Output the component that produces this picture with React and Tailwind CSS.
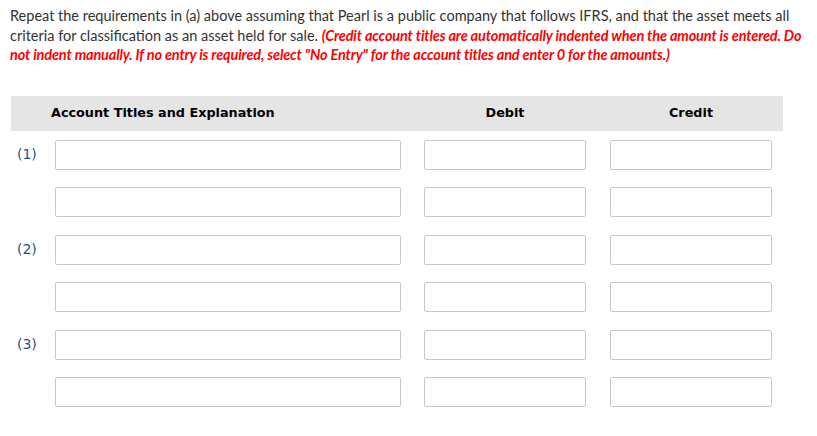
import React from 'react';

const entries = [
  { label: '(1)', lines: 2 },
  { label: '(2)', lines: 2 },
  { label: '(3)', lines: 2 },
];

function Field({ width }) {
  return (
    <input
      type="text"
      className={`${width} h-[30px] border border-[#c8c8c8] rounded-[2px] bg-white outline-none`}
    />
  );
}

export default function App() {
  const rows = [];
  entries.forEach((entry) => {
    for (let i = 0; i < entry.lines; i++) {
      rows.push({ key: `${entry.label}-${i}`, label: i === 0 ? entry.label : '' });
    }
  });

  return (
    <div className="w-[817px] h-[436px] bg-white overflow-hidden">
      {/* Question text */}
      <p className="pl-[10px] pt-[6px] w-[817px] text-[14.5px] leading-[19.5px] text-[#333333] font-['Lato',sans-serif]">
        Repeat the requirements in (a) above assuming that Pearl is a public company that follows IFRS, and that the asset meets all
        criteria for classification as an asset held for sale.{' '}
        <span className="text-[#ff0000] font-bold italic tracking-[-0.15px]">
          (Credit account titles are automatically indented when the amount is entered. Do not indent manually. If no entry is
          required, select "No Entry" for the account titles and enter 0 for the amounts.)
        </span>
      </p>

      {/* Journal table */}
      <div className="ml-[11px] mt-[31px] w-[772px]">
        <div className="flex items-center h-[35px] bg-[#e5e5e5] text-[12.8px] font-bold text-black font-['DejaVu_Sans',Verdana,sans-serif]">
          <div className="w-[44px]" />
          <div className="w-[346px] -ml-[4px]">Account Titles and Explanation</div>
          <div className="w-[162px] ml-[27px] text-center">Debit</div>
          <div className="w-[162px] ml-[24px] text-center">Credit</div>
        </div>

        <div className="pt-[9px] flex flex-col gap-y-[17.6px]">
          {rows.map((row) => (
            <div key={row.key} className="flex items-center">
              <div className="w-[44px] pl-[6px] text-[14px] text-[#2c5282] font-['DejaVu_Sans',Verdana,sans-serif]">
                {row.label}
              </div>
              <Field width="w-[346px]" />
              <div className="ml-[23px]">
                <Field width="w-[162px]" />
              </div>
              <div className="ml-[24px]">
                <Field width="w-[162px]" />
              </div>
            </div>
          ))}
        </div>
      </div>
    </div>
  );
}
